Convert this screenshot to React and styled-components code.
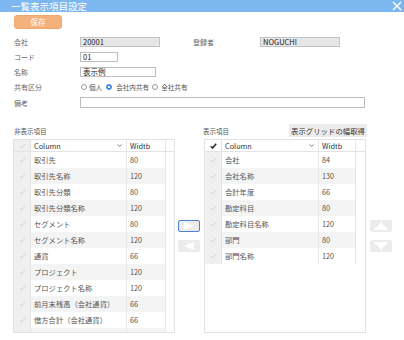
import React from 'react';
import styled, { createGlobalStyle } from 'styled-components';

const Global = createGlobalStyle`
  html, body { margin: 0; padding: 0; background: #fff; }
  body { font-family: "Noto Sans CJK JP", "Noto Sans", sans-serif; }
  * { box-sizing: border-box; }
`;

const Page = styled.div`
  width: 404px;
  height: 340px;
  overflow: hidden;
  background: #fff;
`;

const TitleBar = styled.div`
  height: 12px;
  background: #7db7ef;
  display: flex;
  align-items: center;
  justify-content: space-between;
  padding: 0 2px 0 11px;
`;

const Title = styled.span`
  color: #fff;
  font-size: 9.5px;
  line-height: 11px;
  font-weight: 400;
`;

const Content = styled.div`
  padding: 3px 0 0 14px;
`;

const SaveButton = styled.div`
  width: 48px;
  height: 14px;
  background: #f5b17b;
  border: 1px solid #f0a76e;
  border-radius: 3px;
  color: #fff;
  font-size: 7.5px;
  line-height: 12px;
  text-align: center;
`;

const Form = styled.div`
  margin-top: 8px;
  display: flex;
  flex-direction: column;
  gap: 5px;
`;

const FormRow = styled.div`
  display: flex;
  align-items: center;
  height: ${p => p.$h || 10}px;
`;

const Label = styled.span`
  width: ${p => p.$w || 66}px;
  flex: none;
  font-size: 7px;
  line-height: 10px;
  color: #666;
`;

const Field = styled.div`
  width: ${p => p.$w}px;
  height: 100%;
  flex: none;
  border: 1px solid ${p => (p.$ro ? '#c4c4c4' : '#bdbdbd')};
  background: ${p => (p.$ro ? '#e6e6e6' : '#fff')};
  font-size: 7.5px;
  line-height: 8px;
  color: #222;
  padding: 0 2px;
  margin-left: ${p => p.$ml || 0}px;
  white-space: nowrap;
  overflow: hidden;
`;

const RadioGroup = styled.div`
  display: flex;
  align-items: center;
  margin-left: 1px;
`;

const RadioDot = styled.span`
  width: 6px;
  height: 6px;
  border-radius: 50%;
  flex: none;
  border: 1px solid ${p => (p.$on ? '#3a86f0' : '#9a9a9a')};
  background: ${p => (p.$on ? 'radial-gradient(circle, #fff 0 1.1px, #3a86f0 1.3px)' : '#fff')};
  margin-right: ${p => p.$mr}px;
`;

const RadioText = styled.span`
  font-size: 6.6px;
  line-height: 10px;
  color: #555;
  margin-right: ${p => p.$mr}px;
`;

const Panels = styled.div`
  margin-top: 16px;
  margin-left: -1px;
  display: flex;
  align-items: flex-start;
`;

const Panel = styled.div`
  width: 162px;
  flex: none;
  display: flex;
  flex-direction: column;
  margin-left: ${p => p.$ml || 0}px;
`;

const PanelHead = styled.div`
  height: 15px;
  display: flex;
  align-items: flex-start;
  justify-content: space-between;
`;

const SectionLabel = styled.span`
  font-size: 6.5px;
  line-height: 12px;
  color: #555;
  margin-top: 1px;
  margin-left: ${p => p.$ml || 0}px;
`;

const FetchButton = styled.div`
  height: 13px;
  width: 78px;
  background: #ececec;
  font-size: 7.4px;
  line-height: 13px;
  color: #333;
  text-align: center;
  margin-right: -1px;
`;

const Grid = styled.div`
  height: 194px;
  border: 1px solid #e3e3e3;
  overflow: hidden;
  background: #fff;
`;

const HeadRow = styled.div`
  display: grid;
  grid-template-columns: ${p => p.$cols};
  height: 12px;
  border-bottom: 1px solid #e3e3e3;
  background: #fcfcfc;
`;

const BodyRow = styled.div`
  display: grid;
  grid-template-columns: ${p => p.$cols};
  height: 16px;
`;

const CheckCell = styled.div`
  display: flex;
  align-items: center;
  justify-content: center;
  background: ${p => (p.$white ? '#fff' : '#f0f0f0')};
  border-right: 1px solid #e3e3e3;
`;

const Cell = styled.div`
  display: flex;
  align-items: center;
  justify-content: space-between;
  padding: 0 4px 0 3px;
  font-size: 7.3px;
  color: ${p => (p.$head ? '#333' : '#555')};
  background: ${p => (p.$alt ? '#f4f4f4' : '#fff')};
  border-right: 1px solid #e6e6e6;
  white-space: nowrap;
  overflow: hidden;
`;

const Gutter = styled.div`
  background: #fff;
`;

const ButtonColumn = styled.div`
  width: 22px;
  flex: none;
  margin-left: ${p => p.$ml}px;
  padding-top: 96px;
  display: flex;
  flex-direction: column;
  gap: 8px;
`;

const ArrowButton = styled.div`
  width: 22px;
  height: 12px;
  background: #ececec;
  border-radius: 2px;
  border: 1px solid ${p => (p.$focus ? '#4a80d6' : '#ececec')};
  display: flex;
  align-items: center;
  justify-content: center;
`;

const Check = ({ dark }) => (
  <svg width="7" height="6" viewBox="0 0 7 6">
    <polyline
      points="0.8,3.2 2.6,5 6.2,0.8"
      fill="none"
      stroke={dark ? '#222' : '#cfcfcf'}
      strokeWidth={dark ? 1.5 : 1}
    />
  </svg>
);

const Chevron = () => (
  <svg width="5" height="3" viewBox="0 0 5 3">
    <polyline points="0.5,0.5 2.5,2.5 4.5,0.5" fill="none" stroke="#666" strokeWidth="0.8" />
  </svg>
);

const Tri = ({ dir }) => {
  const pts = {
    right: '0,0 10,4 0,8',
    left: '10,0 0,4 10,8',
    up: '0,8 7,0 14,8',
    down: '0,0 7,8 14,0',
  }[dir];
  const w = dir === 'up' || dir === 'down' ? 14 : 10;
  return (
    <svg width={w} height="8" viewBox={`0 0 ${w} 8`}>
      <polygon points={pts} fill="#fff" />
    </svg>
  );
};

const CloseIcon = () => (
  <svg width="10" height="10" viewBox="0 0 10 10">
    <path d="M1 1 L9 9 M9 1 L1 9" stroke="#fff" strokeWidth="1.4" />
  </svg>
);

const leftRows = [
  ['取引先', 80],
  ['取引先名称', 120],
  ['取引先分類', 80],
  ['取引先分類名称', 120],
  ['セグメント', 80],
  ['セグメント名称', 120],
  ['通貨', 66],
  ['プロジェクト', 120],
  ['プロジェクト名称', 120],
  ['前月末残高（会社通貨）', 66],
  ['借方合計（会社通貨）', 66],
  ['', ''],
];

const rightRows = [
  ['会社', 84],
  ['会社名称', 130],
  ['会計年度', 66],
  ['勘定科目', 80],
  ['勘定科目名称', 120],
  ['部門', 80],
  ['部門名称', 120],
];

const ColumnGrid = ({ cols, rows, darkHead }) => (
  <Grid>
    <HeadRow $cols={cols}>
      <CheckCell $white={darkHead}>
        <Check dark={darkHead} />
      </CheckCell>
      <Cell $head>
        <span>Column</span>
        <Chevron />
      </Cell>
      <Cell $head>Widtb</Cell>
      <Gutter />
    </HeadRow>
    {rows.map(([name, w], i) => (
      <BodyRow key={i} $cols={cols}>
        <CheckCell>
          <Check />
        </CheckCell>
        <Cell $alt={i % 2 === 1}>{name}</Cell>
        <Cell $alt={i % 2 === 1}>{w}</Cell>
        <Gutter />
      </BodyRow>
    ))}
  </Grid>
);

export default function App() {
  return (
    <Page>
      <Global />
      <TitleBar>
        <Title>一覧表示項目設定</Title>
        <CloseIcon />
      </TitleBar>
      <Content>
        <SaveButton>保存</SaveButton>
        <Form>
          <FormRow>
            <Label>会社</Label>
            <Field $w={80} $ro>20001</Field>
            <Label $w={67} style={{ marginLeft: 33 }}>登録者</Label>
            <Field $w={80} $ro>NOGUCHI</Field>
          </FormRow>
          <FormRow>
            <Label>コード</Label>
            <Field $w={38}>01</Field>
          </FormRow>
          <FormRow>
            <Label>名称</Label>
            <Field $w={76}>表示例</Field>
          </FormRow>
          <FormRow>
            <Label>共有区分</Label>
            <RadioGroup>
              <RadioDot $mr={2} />
              <RadioText $mr={4}>個人</RadioText>
              <RadioDot $on $mr={4} />
              <RadioText $mr={3}>会社内共有</RadioText>
              <RadioDot $mr={3} />
              <RadioText $mr={0}>全社共有</RadioText>
            </RadioGroup>
          </FormRow>
          <FormRow $h={11}>
            <Label>備考</Label>
            <Field $w={285} />
          </FormRow>
        </Form>
        <Panels>
          <Panel>
            <PanelHead>
              <SectionLabel $ml={1}>非表示項目</SectionLabel>
            </PanelHead>
            <ColumnGrid cols="17px 96px 39px 1fr" rows={leftRows} />
          </Panel>
          <ButtonColumn $ml={3}>
            <ArrowButton $focus>
              <Tri dir="right" />
            </ArrowButton>
            <ArrowButton>
              <Tri dir="left" />
            </ArrowButton>
          </ButtonColumn>
          <Panel $ml={4}>
            <PanelHead>
              <SectionLabel $ml={-1}>表示項目</SectionLabel>
              <FetchButton>表示グリッドの幅取得</FetchButton>
            </PanelHead>
            <ColumnGrid cols="17px 97px 37px 1fr" rows={rightRows} darkHead />
          </Panel>
          <ButtonColumn $ml={4}>
            <ArrowButton>
              <Tri dir="up" />
            </ArrowButton>
            <ArrowButton>
              <Tri dir="down" />
            </ArrowButton>
          </ButtonColumn>
        </Panels>
      </Content>
    </Page>
  );
}
